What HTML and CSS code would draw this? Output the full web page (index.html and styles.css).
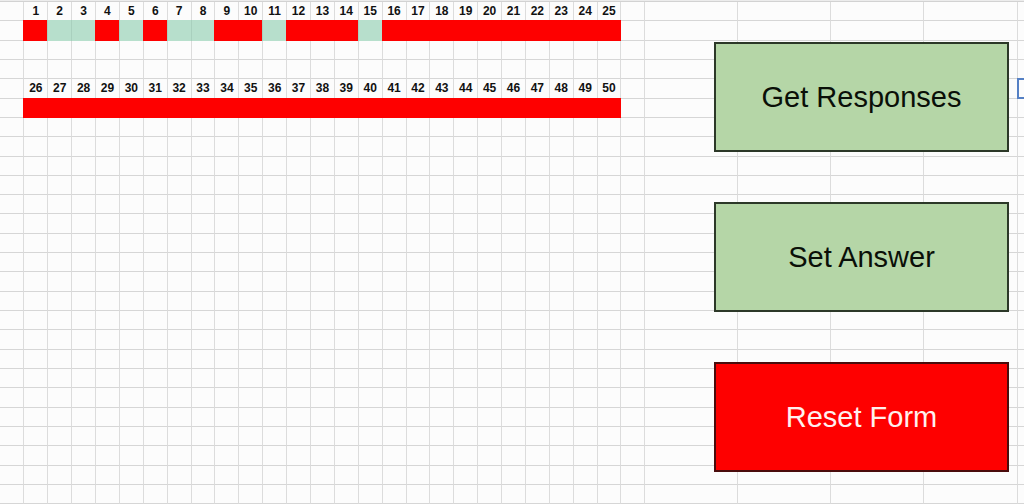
FILE: index.html
```
<!DOCTYPE html>
<html lang="en">
<head>
<meta charset="utf-8">
<title>Response Sheet</title>
<link rel="stylesheet" href="styles.css">
</head>
<body>
<main class="page">
  <table class="sheet" aria-label="Responses"><tbody id="rows"></tbody></table>
  <div class="drawings">
    <button class="drawing" type="button">Get Responses</button>
    <button class="drawing" type="button">Set Answer</button>
    <button class="drawing drawing-reset" type="button">Reset Form</button>
  </div>
</main>
<script src="sheet.js"></script>
</body>
</html>
```
FILE: styles.css
```
* {
  box-sizing: border-box;
}

body {
  margin: 0;
  background: #fcfcfc;
  font-family: "Liberation Sans", Arial, sans-serif;
}

.page {
  position: relative;
  overflow: hidden;
}

.sheet {
  display: flex;
  flex-direction: column;
  height: 100vh;
  border-top: 1px solid #ececec;
}

.sheet tbody {
  flex: 1;
  display: flex;
  flex-direction: column;
  border-top: 1px solid #d2d2d2;
}

.sheet tr {
  flex: 1;
  min-height: 0;
  display: grid;
  grid-template-columns: 49fr repeat(26, 48fr) repeat(4, 187fr) 13fr;
}

.sheet th,
.sheet td {
  min-width: 0;
  padding: 0;
  border-right: 1px solid #dcdcdc;
  border-bottom: 1px solid #d6d6d6;
}

.sheet td:last-child {
  border-right: 0;
}

.sheet th {
  display: flex;
  align-items: center;
  justify-content: center;
  font-size: 12px;
  line-height: 16px;
  color: #111;
}

.sheet .wrong,
.sheet .right {
  margin: -1px 0 0 -1px;
  border: 0;
}

.sheet .wrong {
  background: #fe0000;
}

.sheet .right {
  background: #b7dfcc;
  border-left: 1px solid #a9d0be;
}

.sheet .active {
  margin: -1px 0 0 -1px;
  border: 2px solid #5580c4;
  border-right: 0;
}

.drawings {
  position: absolute;
  top: 42px;
  right: 15px;
  display: flex;
  flex-direction: column;
  gap: 50px;
}

.drawing {
  width: 295px;
  height: 110px;
  padding: 0;
  border: 2px solid #2c3828;
  background: #b5d6a7;
  color: #0a0f08;
  font-family: inherit;
  font-size: 29px;
  line-height: 36px;
}

.drawing-reset {
  border-color: #4a0c0c;
  background: #fe0000;
  color: #fff0ee;
}
```
FILE: sheet.js
```
const ROWS = 26;
const COLUMNS = 32;
const PER_ROW = 25;
const correct = new Set([2, 3, 5, 7, 8, 11, 15]);
const blocks = { 0: 1, 4: 26 };
const body = document.getElementById("rows");

for (let r = 0; r < ROWS; r++) {
  const row = document.createElement("tr");
  for (let c = 0; c < COLUMNS; c++) {
    const inBlock = c >= 1 && c <= PER_ROW;
    const heading = inBlock && r in blocks;
    const cell = document.createElement(heading ? "th" : "td");
    if (heading) {
      cell.scope = "col";
      cell.textContent = blocks[r] + c - 1;
    } else if (inBlock && r - 1 in blocks) {
      const question = blocks[r - 1] + c - 1;
      cell.className = correct.has(question) ? "right" : "wrong";
    } else if (r === 4 && c === COLUMNS - 1) {
      cell.className = "active";
    }
    row.append(cell);
  }
  body.append(row);
}
```
